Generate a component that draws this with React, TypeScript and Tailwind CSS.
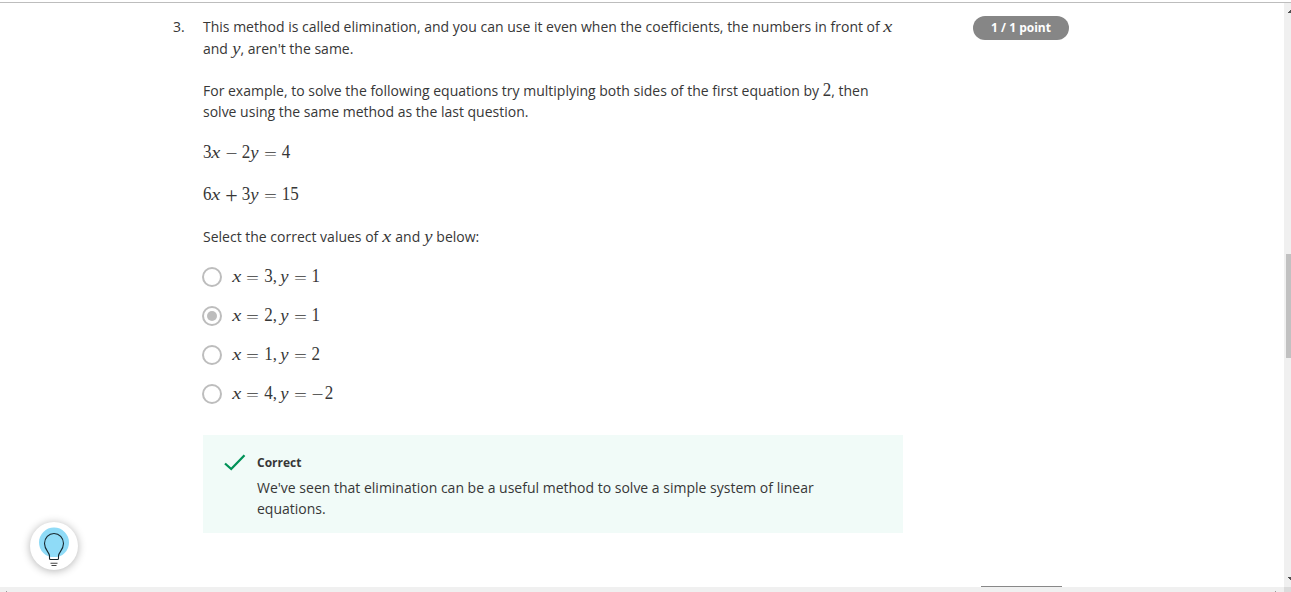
import React from "react";

const glyph = "inline-flex h-[16px] items-center justify-center align-baseline leading-none whitespace-pre";

const tokens: Record<string, string> = {
  x: "w-[9.7px] italic text-[17px] scale-x-[1.2]",
  y: "w-[8.9px] italic text-[17px] scale-x-[1.1]",
  "=": "mx-[4.65px] w-[13.2px] scale-x-[1.35] scale-y-90 translate-y-px",
  "+": "mx-[3.75px] w-[13.2px] scale-x-[1.3] scale-y-[1.3]",
  "−": "mx-[3.75px] w-[13.2px] scale-x-[1.25] scale-y-90 translate-y-px",
  "~": "w-[13.2px] scale-x-[1.25] scale-y-90 translate-y-px",
  ",": "mr-[2.8px] w-[4.7px]",
};

function Tex({ children }: { children: string }) {
  return (
    <span className="inline-block font-['Liberation_Serif',serif] text-[17px] leading-none whitespace-nowrap">
      {Array.from(children).map((c, i) => (
        <span key={i} className={`${glyph} ${tokens[c] ?? "w-[8.47px] -translate-y-px scale-y-[1.08]"}`}>
          {c === "~" ? "−" : c}
        </span>
      ))}
    </span>
  );
}

function Option({ math, checked }: { math: string; checked?: boolean }) {
  return (
    <label className="flex h-[39px] items-center">
      <span className="-ml-px flex size-5 items-center justify-center rounded-full border-2 border-[#bdbdbd]">
        {checked && <span className="size-[10px] rounded-full bg-[#bdbdbd]" />}
      </span>
      <span className="ml-[10px] flex h-5 items-center">
        <Tex>{math}</Tex>
      </span>
    </label>
  );
}

function Question() {
  return (
    <main className="w-[700px] whitespace-nowrap">
      <div className="h-[22px]">
        This method is called elimination, and you can use it even when the coefficients, the numbers in front of <Tex>x</Tex>
      </div>
      <div className="h-[42px]">
        and <Tex>y</Tex>, aren't the same.
      </div>
      <div className="h-[21px]">
        For example, to solve the following equations try multiplying both sides of the first equation by <Tex>2</Tex>, then
      </div>
      <div className="h-[41px]">solve using the same method as the last question.</div>
      <div className="h-[42px]"><Tex>3x−2y=4</Tex></div>
      <div className="h-[42px]"><Tex>6x+3y=15</Tex></div>
      <div className="h-[31px]">
        Select the correct values of <Tex>x</Tex> and <Tex>y</Tex> below:
      </div>
      <Option math="x=3,y=1" />
      <Option math="x=2,y=1" checked />
      <Option math="x=1,y=2" />
      <Option math="x=4,y=~2" />
      <section className="mt-[22px] flex h-[98px] bg-[#f1fbf8] pt-[17px] pl-5">
        <svg className="-mt-px size-6 shrink-0" viewBox="0 0 24 24" fill="none">
          <path d="M2 12.5 8.2 18 21.5 4.2" stroke="#009258" strokeWidth="2.3" />
        </svg>
        <div className="ml-[10px]">
          <div className="h-[25px] text-[12px] leading-[21px] font-bold">Correct</div>
          <div>We've seen that elimination can be a useful method to solve a simple system of linear</div>
          <div>equations.</div>
        </div>
      </section>
    </main>
  );
}

function HintButton() {
  return (
    <button className="absolute top-[522px] left-[30px] size-12 rounded-full bg-white shadow-[0_1px_9px_rgba(0,0,0,0.3)]" aria-label="Hint">
      <svg className="size-12" viewBox="0 0 48 48" fill="none">
        <circle cx="24" cy="20.5" r="15" fill="#8fdbf7" />
        <path d="M19.5 35h9v2.3h-9z" fill="white" />
        <path d="M19.5 36.5v-2.7c0-3.3-5-6-5-12.3a9.5 10 0 0 1 19 0c0 6.3-5 9-5 12.3v2.7q0 1-1 1h-7q-1 0-1-1Z" stroke="#17272e" strokeWidth="1.1" />
        <path d="M20.5 41.3h7M21.5 43.5h5" stroke="#444" strokeWidth="1.1" />
      </svg>
    </button>
  );
}

export default function App() {
  return (
    <div className="relative flex h-[592px] w-[1291px] flex-col overflow-hidden bg-white pt-[2px] font-['Open_Sans',sans-serif] text-[14px] leading-[21px] text-[#373737]">
      <div className="h-px shrink-0 bg-[#bdbdbd]" />
      <div className="flex min-h-0 flex-1">
        <div className="flex w-[1284px] flex-col">
          <div className="flex flex-1 pt-[13px]">
            <div className="w-[203px] pl-[173px]">3.</div>
            <Question />
            <div className="ml-[70px] flex w-24 flex-col justify-between">
              <div className="h-6 rounded-full bg-[#868686] text-center text-[12px] leading-6 font-bold text-white">1 / 1 point</div>
              <div className="mr-[7px] ml-[8px] h-px bg-[#888]" />
            </div>
          </div>
          <div className="flex h-[5px] justify-between bg-[#f0f0f0] pt-1 pr-2 pl-[6px]">
            <span className="size-px bg-[#999]" />
            <span className="size-px bg-[#999]" />
          </div>
        </div>
        <div className="flex w-[7px] flex-col items-end bg-[#f0f0f0]">
          <svg className="mt-[7px] h-[3px] w-[3px]" viewBox="0 0 3 3"><path d="M0 3V2h1V1h1V0h1v3z" fill="#505050" /></svg>
          <div className="mt-[241px] h-[104px] w-[5px] bg-[#c1c1c1]" />
          <svg className="mt-[219px] h-[3px] w-[3px]" viewBox="0 0 3 3"><path d="M0 0h3v3H2V2H1V1H0z" fill="#505050" /></svg>
          <div className="mt-auto h-[5px] w-full bg-[#dcdcdc]" />
        </div>
      </div>
      <HintButton />
    </div>
  );
}
